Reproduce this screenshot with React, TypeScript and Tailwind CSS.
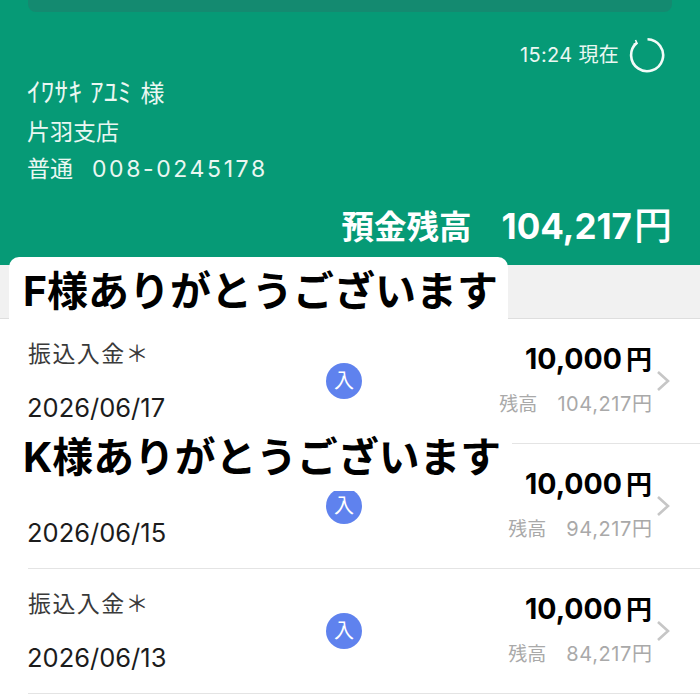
import React from 'react';

const ROWS = [
  { date: '2026/06/17', balance: '104,217', covered: false },
  { date: '2026/06/15', balance: '94,217', covered: true },
  { date: '2026/06/13', balance: '84,217', covered: false },
];

const Row = ({ date, balance, covered }: { date: string; balance: string; covered: boolean }) => (
  <div className="h-[125px] pl-[28px] flex">
    <div className="relative flex-1 flex border-b border-[#e4e4e4]">
      <div className="w-[298px] shrink-0 pt-[22px]">
        {/* the second row's label sits under the K sticker */}
        <div className="h-[26px] text-[23px] leading-[26px] text-[#3a3a3a] tracking-[1.4px] whitespace-nowrap">
          {covered ? '' : '振込入金＊'}
        </div>
        <div className="mt-[26px] -ml-[1px] text-[25.5px] leading-[30px] text-[#1c1c1c]">{date}</div>
      </div>
      <div className="w-[36px] h-[36px] mt-[44px] rounded-full bg-[#5f82ee] text-white text-[20px] leading-[36px] text-center">入</div>
      <div className="flex-1 flex flex-col items-end pr-[48px] pt-[22px]">
        <div className="flex items-baseline text-black font-bold">
          <span className="text-[28.5px] leading-[36px]">10,000</span>
          <span className="text-[26px] leading-[36px] ml-[4px] font-bold">円</span>
        </div>
        <div className="mt-[13px] flex items-baseline text-[#a9a9a9] text-[20px] leading-[26px]">
          <span className="text-[19px]">残高</span>
          <span className="ml-[20px] tracking-[0.6px]">{balance}</span>
          <span>円</span>
        </div>
      </div>
      <svg className="absolute right-[29px] top-[50px]" width="16" height="24" viewBox="0 0 16 24" fill="none">
        <path d="M3 3l10 9-10 9" stroke="#c6c6c6" strokeWidth="2.6" />
      </svg>
    </div>
  </div>
);

export default function App() {
  return (
    <div
      className="relative w-[700px] h-[700px] overflow-hidden bg-white"
      style={{ fontFamily: 'Inter, "Noto Sans CJK JP", sans-serif' }}
    >
      <div className="h-[265px] bg-[#069a76] text-[#eaf7f2] flex flex-col">
        <div className="mx-[28px] h-[12px] rounded-b-[8px] bg-[#148a70]" />
        <div className="flex items-center justify-end mt-[25px] pr-[35px]">
          <span className="text-[20px] leading-[34px] tracking-[0.3px] whitespace-nowrap">15:24 現在</span>
          <svg className="ml-[10px]" width="36" height="36" viewBox="0 0 36 36" fill="none">
            <path d="M18.5 2.2A16 16 0 1 1 8 5.8" stroke="#f2fbf8" strokeWidth="2.6" />
            <path d="M6.5 3l1.5 3.2-3.4 1" stroke="#f2fbf8" strokeWidth="1.6" />
          </svg>
        </div>
        <div className="mt-[1px] pl-[27px] text-[23px] leading-[38px]">
          <div className="flex items-baseline whitespace-nowrap">
            <span className="text-[27px] tracking-[0.3px]">ｲﾜｻｷ ｱﾕﾐ</span>
            <span className="ml-[9px] text-[24px]">様</span>
          </div>
          <div>片羽支店</div>
          <div className="-mt-[1px] flex whitespace-nowrap">
            <span>普通</span>
            <span className="ml-[19px] tracking-[2.6px]">008-0245178</span>
          </div>
        </div>
        <div className="mt-[17px] pr-[28px] flex justify-end items-baseline text-white font-bold whitespace-nowrap">
          <span className="text-[32.5px] leading-[40px]">預金残高</span>
          <span className="ml-[30px] text-[35px] leading-[40px]">104,217</span>
          <span className="ml-[2px] text-[38px] leading-[40px] font-medium">円</span>
        </div>
      </div>
      <div className="h-[54px] bg-[#f1f1f1] border-b border-[#dedede]" />
      {ROWS.map((row) => (
        <Row key={row.date} date={row.date} balance={row.balance} covered={row.covered} />
      ))}

      <div className="absolute left-[9px] top-[257px] w-[499px] h-[62px] bg-white rounded-t-[10px] pl-[14px] pt-[9px] text-[41px] leading-[50px] font-bold text-black whitespace-nowrap">
        F様ありがとうございます
      </div>
      <div className="absolute left-0 top-[431px] w-[512px] h-[60px] bg-white pl-[23px] pt-[1px] text-[40.8px] leading-[50px] font-bold text-black whitespace-nowrap">
        K様ありがとうございます
      </div>
    </div>
  );
}
